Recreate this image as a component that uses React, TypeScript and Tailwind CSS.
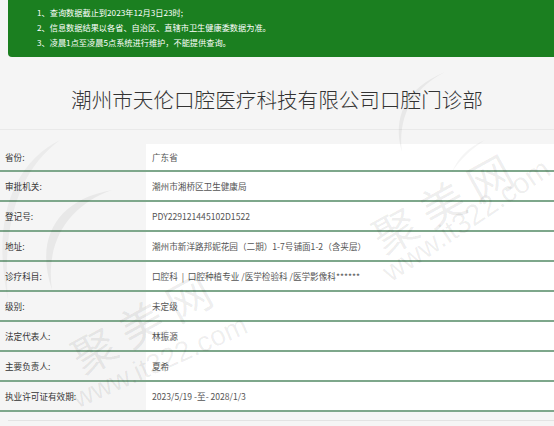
import React from "react";

const rows: { label: string; value: string }[] = [
  { label: "省份:", value: "广东省" },
  { label: "审批机关:", value: "潮州市湘桥区卫生健康局" },
  { label: "登记号:", value: "PDY229121445102D1522" },
  { label: "地址:", value: "潮州市新洋路邦妮花园（二期）1-7号铺面1-2（含夹层）" },
  { label: "诊疗科目:", value: "口腔科  |  口腔种植专业 /医学检验科 /医学影像科******" },
  { label: "级别:", value: "未定级" },
  { label: "法定代表人:", value: "林振源" },
  { label: "主要负责人:", value: "夏希" },
  { label: "执业许可证有效期:", value: "2023/5/19 -至- 2028/1/3" },
];

const notices = [
  "1、查询数据截止到2023年12月3日23时;",
  "2、信息数据结果以各省、自治区、直辖市卫生健康委数据为准。",
  "3、凌晨1点至凌晨5点系统进行维护，不能提供查询。",
];

export default function App() {
  return (
    <div className="relative w-[554px] h-[426px] overflow-hidden bg-[#f5f5f5] font-['Noto_Sans_CJK_SC',sans-serif]">
      {/* Notice */}
      <div className="ml-2 bg-[#1b7f20] rounded-bl-[4px] pl-[29px] pt-[5px] pb-[7px] text-[8.2px] leading-[15px] text-white">
        {notices.map((n) => (
          <div key={n}>{n}</div>
        ))}
      </div>

      {/* Title */}
      <div className="border-b border-[#e9e9e9] pt-[27px] pb-[15px] text-center">
        <h1 className="text-[20.6px] leading-[30px] font-light text-[#333]">
          潮州市天伦口腔医疗科技有限公司口腔门诊部
        </h1>
      </div>

      {/* Table */}
      <div className="mt-[14px]">
        {rows.map((r, i) => (
          <div
            key={r.label}
            className={`flex border-b-2 border-[#7ea78b] text-[8.6px] ${i === 0 ? "h-[28px]" : "h-[30px]"}`}
          >
            <div className="w-[146px] shrink-0 flex items-center pl-[5px] text-[#333] bg-[#f5f5f5]">
              {r.label}
            </div>
            <div className="flex-1 flex items-center pl-[6px] text-[#555] bg-white whitespace-pre">
              {r.value}
            </div>
          </div>
        ))}
      </div>
      <div className="ml-2 mt-[8px] border-t border-[#e3e3e3]" />

      {/* Watermarks */}
      <svg
        className="pointer-events-none absolute left-0 top-0"
        width="554"
        height="426"
        viewBox="0 0 554 426"
      >
        <path d="M445 72 C410 90 398 120 402 152 C392 118 405 88 445 72 Z" fill="rgba(0,0,0,0.05)" />
        <path d="M112 190 C70 205 45 240 52 290 C35 240 55 200 112 190 Z" fill="rgba(0,0,0,0.05)" />
        <path d="M60 140 C20 170 2 220 8 300 C-8 225 10 165 60 140 Z" fill="rgba(0,0,0,0.04)" />
        <path d="M485 140 C470 150 460 160 452 172 C458 158 468 147 485 140 Z" fill="rgba(0,0,0,0.04)" />
      </svg>
      <div className="pointer-events-none absolute left-[361px] top-[178px] w-[170px] h-[44px] -rotate-[29deg] text-center text-[44px] leading-[44px] tracking-[10px] text-black/[0.07]">
        聚美网
      </div>
      <div className="pointer-events-none absolute left-[360px] top-[206px] w-[212px] h-[28px] -rotate-[34deg] text-center text-[29px] leading-[28px] text-black/[0.07] font-['Liberation_Sans',sans-serif]">
        www.it322.com
      </div>
      <div className="pointer-events-none absolute left-[60px] top-[298px] w-[170px] h-[44px] -rotate-[29deg] text-center text-[44px] leading-[44px] tracking-[10px] text-black/[0.07]">
        聚美网
      </div>
      <div className="pointer-events-none absolute left-[58px] top-[348px] w-[204px] h-[28px] -rotate-[24deg] text-center text-[28px] leading-[28px] text-black/[0.07] font-['Liberation_Sans',sans-serif]">
        www.it322.com
      </div>
    </div>
  );
}
